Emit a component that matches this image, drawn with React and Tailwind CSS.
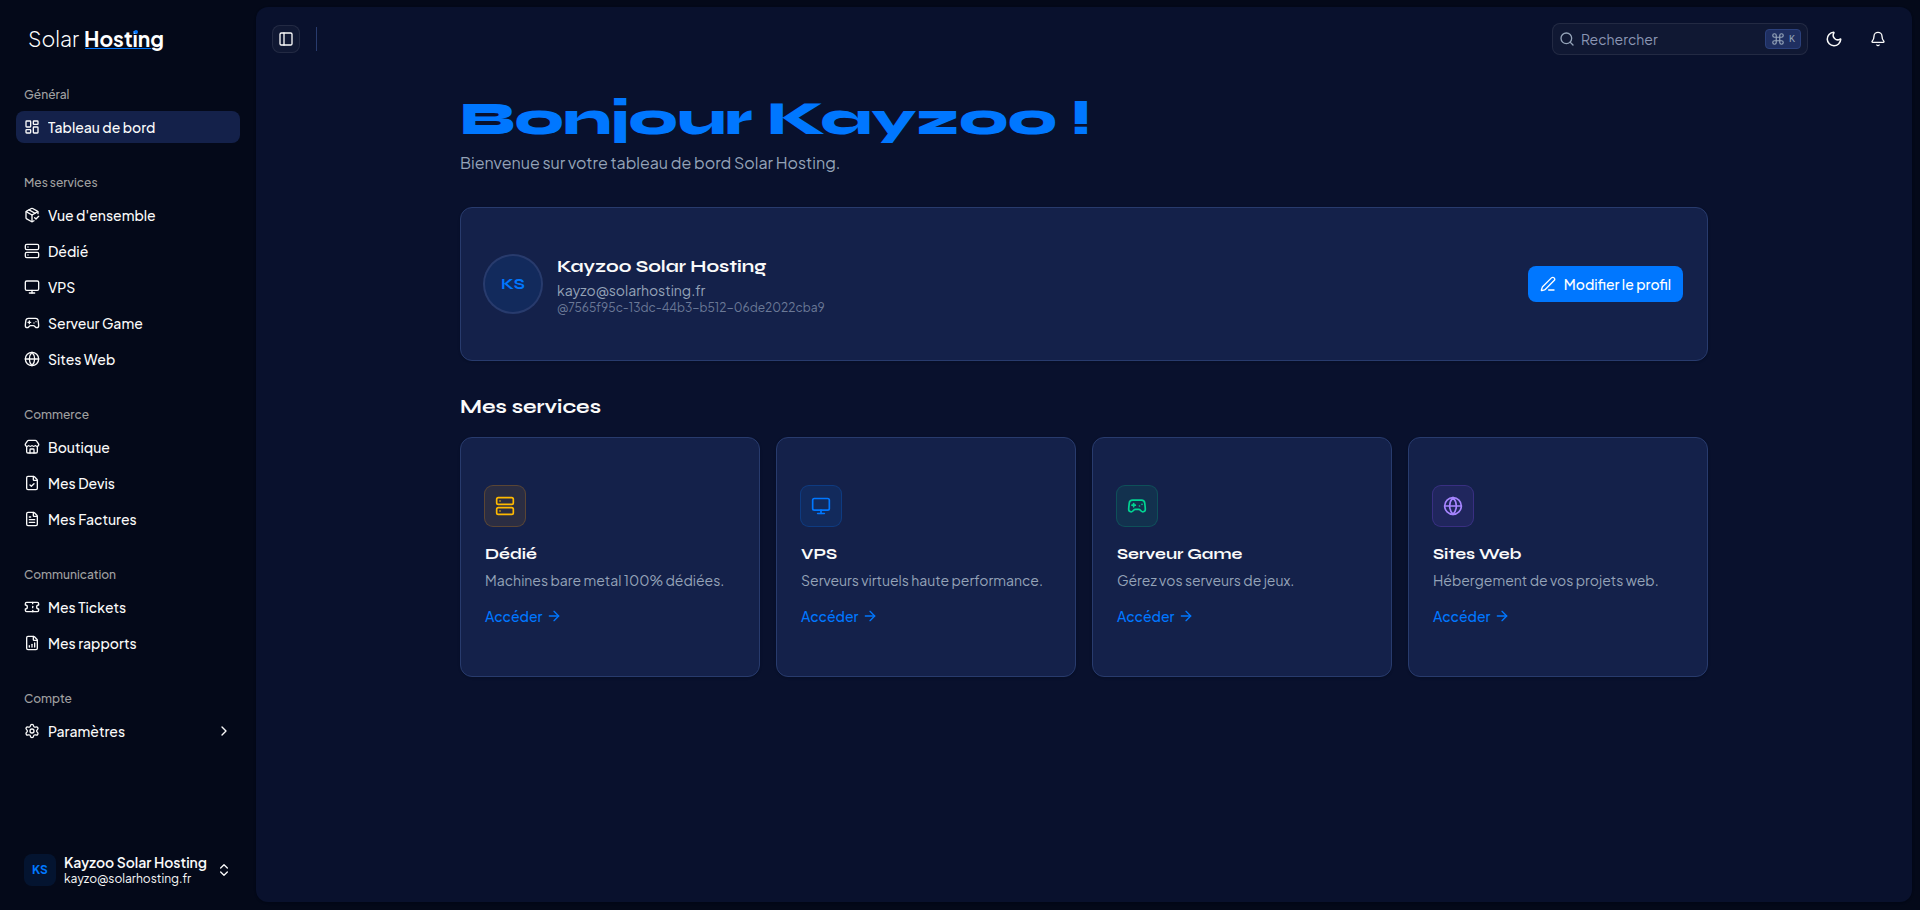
import {
	ArrowRight,
	Bell,
	ChevronRight,
	ChevronsUpDown,
	Command,
	FileChartColumnIncreasing,
	FileCheck,
	FileText,
	Gamepad2,
	Globe,
	LayoutDashboard,
	Monitor,
	Moon,
	PackageCheck,
	PanelLeft,
	PenLine,
	Search,
	Server,
	Settings,
	Store,
	Ticket,
} from 'lucide-react';
import clsx from 'clsx';

const user = {
	name: 'Kayzoo Solar Hosting',
	email: 'kayzo@solarhosting.fr',
	initials: 'KS',
	id: '@7565f95c-13dc-44b3-b512-06de2022cba9',
};

const navGroups = [
	{
		label: 'Général',
		items: [{ label: 'Tableau de bord', icon: LayoutDashboard, active: true }],
	},
	{
		label: 'Mes services',
		items: [
			{ label: "Vue d'ensemble", icon: PackageCheck },
			{ label: 'Dédié', icon: Server },
			{ label: 'VPS', icon: Monitor },
			{ label: 'Serveur Game', icon: Gamepad2 },
			{ label: 'Sites Web', icon: Globe },
		],
	},
	{
		label: 'Commerce',
		items: [
			{ label: 'Boutique', icon: Store },
			{ label: 'Mes Devis', icon: FileCheck },
			{ label: 'Mes Factures', icon: FileText },
		],
	},
	{
		label: 'Communication',
		items: [
			{ label: 'Mes Tickets', icon: Ticket },
			{ label: 'Mes rapports', icon: FileChartColumnIncreasing },
		],
	},
	{
		label: 'Compte',
		items: [{ label: 'Paramètres', icon: Settings, expandable: true }],
	},
];

const services = [
	{
		title: 'Dédié',
		description: 'Machines bare metal 100% dédiées.',
		icon: Server,
		tone: 'bg-amber-500/10 ring-amber-500/30 text-amber-400',
	},
	{
		title: 'VPS',
		description: 'Serveurs virtuels haute performance.',
		icon: Monitor,
		tone: 'bg-[#0077ff]/10 ring-[#0077ff]/30 text-[#0077ff]',
	},
	{
		title: 'Serveur Game',
		description: 'Gérez vos serveurs de jeux.',
		icon: Gamepad2,
		tone: 'bg-emerald-500/10 ring-emerald-500/30 text-emerald-400',
	},
	{
		title: 'Sites Web',
		description: 'Hébergement de vos projets web.',
		icon: Globe,
		tone: 'bg-violet-500/10 ring-violet-500/30 text-violet-400',
	},
];

const Logo = () => (
	<svg width="140" height="32" viewBox="0 0 140 32" className="block" role="img" aria-label="Solar Hosting">
		<text x="0" y="24" fill="#ffffff" fontSize="21" fontWeight="300">
			Solar
		</text>
		<text x="56" y="24" fill="#ffffff" fontSize="21" fontWeight="700">
			Hosting
		</text>
		<rect x="57" y="25" width="66" height="1" fill="#0077ff" />
		<circle cx="108" cy="9" r="2" fill="#0077ff" />
	</svg>
);

const NavItem = ({ item }) => {
	const Icon = item.icon;

	return (
		<li>
			<a href="#" className={clsx('flex h-8 items-center gap-2 rounded-lg px-2 text-sm font-medium text-neutral-50', item.active && 'bg-[#14214a]')}>
				<Icon className="size-4 shrink-0" />
				<span className="flex-1 truncate">{item.label}</span>
				{item.expandable && <ChevronRight className="size-4 shrink-0" />}
			</a>
		</li>
	);
};

const Sidebar = () => (
	<aside className="flex w-64 shrink-0 flex-col px-4 pt-[23px] pb-4">
		<a href="#" className="ml-3 block h-8">
			<Logo />
		</a>

		<nav className="mt-6 flex flex-1 flex-col gap-6">
			{navGroups.map((group) => (
				<div key={group.label}>
					<h2 className="flex h-8 items-center px-2 text-xs font-medium text-neutral-400">{group.label}</h2>
					<ul className="flex flex-col gap-1">
						{group.items.map((item) => (
							<NavItem key={item.label} item={item} />
						))}
					</ul>
				</div>
			))}
		</nav>

		<button type="button" className="flex h-12 items-center gap-2 rounded-lg px-2 text-left text-neutral-50">
			<span className="flex size-8 shrink-0 items-center justify-center rounded-lg bg-[#0077ff]/10 text-xs font-bold text-[#0077ff]">{user.initials}</span>
			<span className="min-w-0 flex-1">
				<span className="block truncate text-sm leading-[18px] font-semibold">{user.name}</span>
				<span className="block truncate text-xs">{user.email}</span>
			</span>
			<ChevronsUpDown className="size-4 shrink-0" />
		</button>
	</aside>
);

const Header = () => (
	<header className="flex h-16 shrink-0 items-center px-4">
		<button type="button" aria-label="Afficher ou masquer le menu" className="flex size-7 items-center justify-center rounded-lg border border-white/8 bg-white/3 text-neutral-50">
			<PanelLeft className="size-4" />
		</button>
		<div className="ml-4 h-6 w-px bg-[#283b6d]" />

		<div className="ml-auto flex items-center gap-2">
			<label className="flex h-8 w-64 items-center gap-1.5 rounded-lg border border-white/8 bg-white/3 px-1.5 text-[#94a3b8]">
				<Search className="size-4 shrink-0" />
				<input type="text" placeholder="Rechercher" aria-label="Rechercher" className="min-w-0 flex-1 bg-transparent text-sm outline-none placeholder:text-[#8b96b4]" />
				<kbd className="flex h-5 items-center gap-1 rounded border border-[#2b407b] bg-[#1f2f61] px-[5px] font-['Liberation_Mono',monospace] text-[10px] text-[#94a3b8]">
					<Command className="size-3.5" />K
				</kbd>
			</label>
			<button type="button" aria-label="Changer de thème" className="flex size-9 items-center justify-center rounded-lg text-neutral-50">
				<Moon className="size-[18px]" />
			</button>
			<button type="button" aria-label="Notifications" className="flex size-9 items-center justify-center rounded-lg text-neutral-50">
				<Bell className="size-4" />
			</button>
		</div>
	</header>
);

const ProfileCard = () => (
	<section className="flex items-center gap-4 rounded-xl border border-[#283b6d] bg-[#14214a] px-6 py-11 shadow-sm">
		<div className="flex size-14 shrink-0 items-center justify-center rounded-full bg-[#0077ff]/10 font-['Syne',Inter,sans-serif] font-bold text-[#0077ff] ring-2 ring-[#283b6d]">
			{user.initials}
		</div>
		<div className="min-w-0 flex-1">
			<h2 className="truncate font-['Syne',Inter,sans-serif] text-lg font-bold text-neutral-50">{user.name}</h2>
			<p className="truncate text-sm text-[#94a3b8]">{user.email}</p>
			<p className="truncate text-xs text-[#6b7997]">{user.id}</p>
		</div>
		<button type="button" className="flex h-9 shrink-0 items-center gap-2 rounded-lg bg-[#0077ff] px-3 text-sm font-medium text-white">
			<PenLine className="size-4" />
			Modifier le profil
		</button>
	</section>
);

const ServiceCard = ({ service }) => {
	const Icon = service.icon;

	return (
		<article className="min-h-60 rounded-xl border border-[#283b6d] bg-[#14214a] px-6 py-12 shadow-sm">
			<div className={clsx('flex size-10 items-center justify-center rounded-lg ring-1', service.tone)}>
				<Icon className="size-5" />
			</div>
			<h3 className="mt-4 font-['Syne',Inter,sans-serif] text-base font-bold text-neutral-50">{service.title}</h3>
			<p className="mt-1 text-sm text-[#94a3b8]">{service.description}</p>
			<a href="#" className="mt-4 flex items-center gap-1 text-sm font-medium text-[#0077ff]">
				Accéder
				<ArrowRight className="size-4" />
			</a>
		</article>
	);
};

const App = () => {
	return (
		<div className="flex min-h-screen bg-[#040919] font-['Plus_Jakarta_Sans',Inter,sans-serif]">
			<Sidebar />

			<main className="mt-[7px] mr-2 mb-2 min-w-0 flex-1 rounded-xl bg-[#09112d] shadow-sm">
				<Header />

				<div className="mx-auto flex max-w-7xl flex-col px-4 pt-6 pb-12">
					<h1 className="font-['Syne',Inter,sans-serif] text-5xl font-extrabold text-[#0077ff]">Bonjour Kayzoo !</h1>
					<p className="mt-2 mb-8 text-[#94a3b8]">Bienvenue sur votre tableau de bord Solar Hosting.</p>

					<ProfileCard />

					<h2 className="mt-8 mb-4 font-['Syne',Inter,sans-serif] text-xl font-bold text-neutral-50">Mes services</h2>
					<div className="grid grid-cols-1 gap-4 sm:grid-cols-2 lg:grid-cols-4">
						{services.map((service) => (
							<ServiceCard key={service.title} service={service} />
						))}
					</div>
				</div>
			</main>
		</div>
	);
};

export default App;
